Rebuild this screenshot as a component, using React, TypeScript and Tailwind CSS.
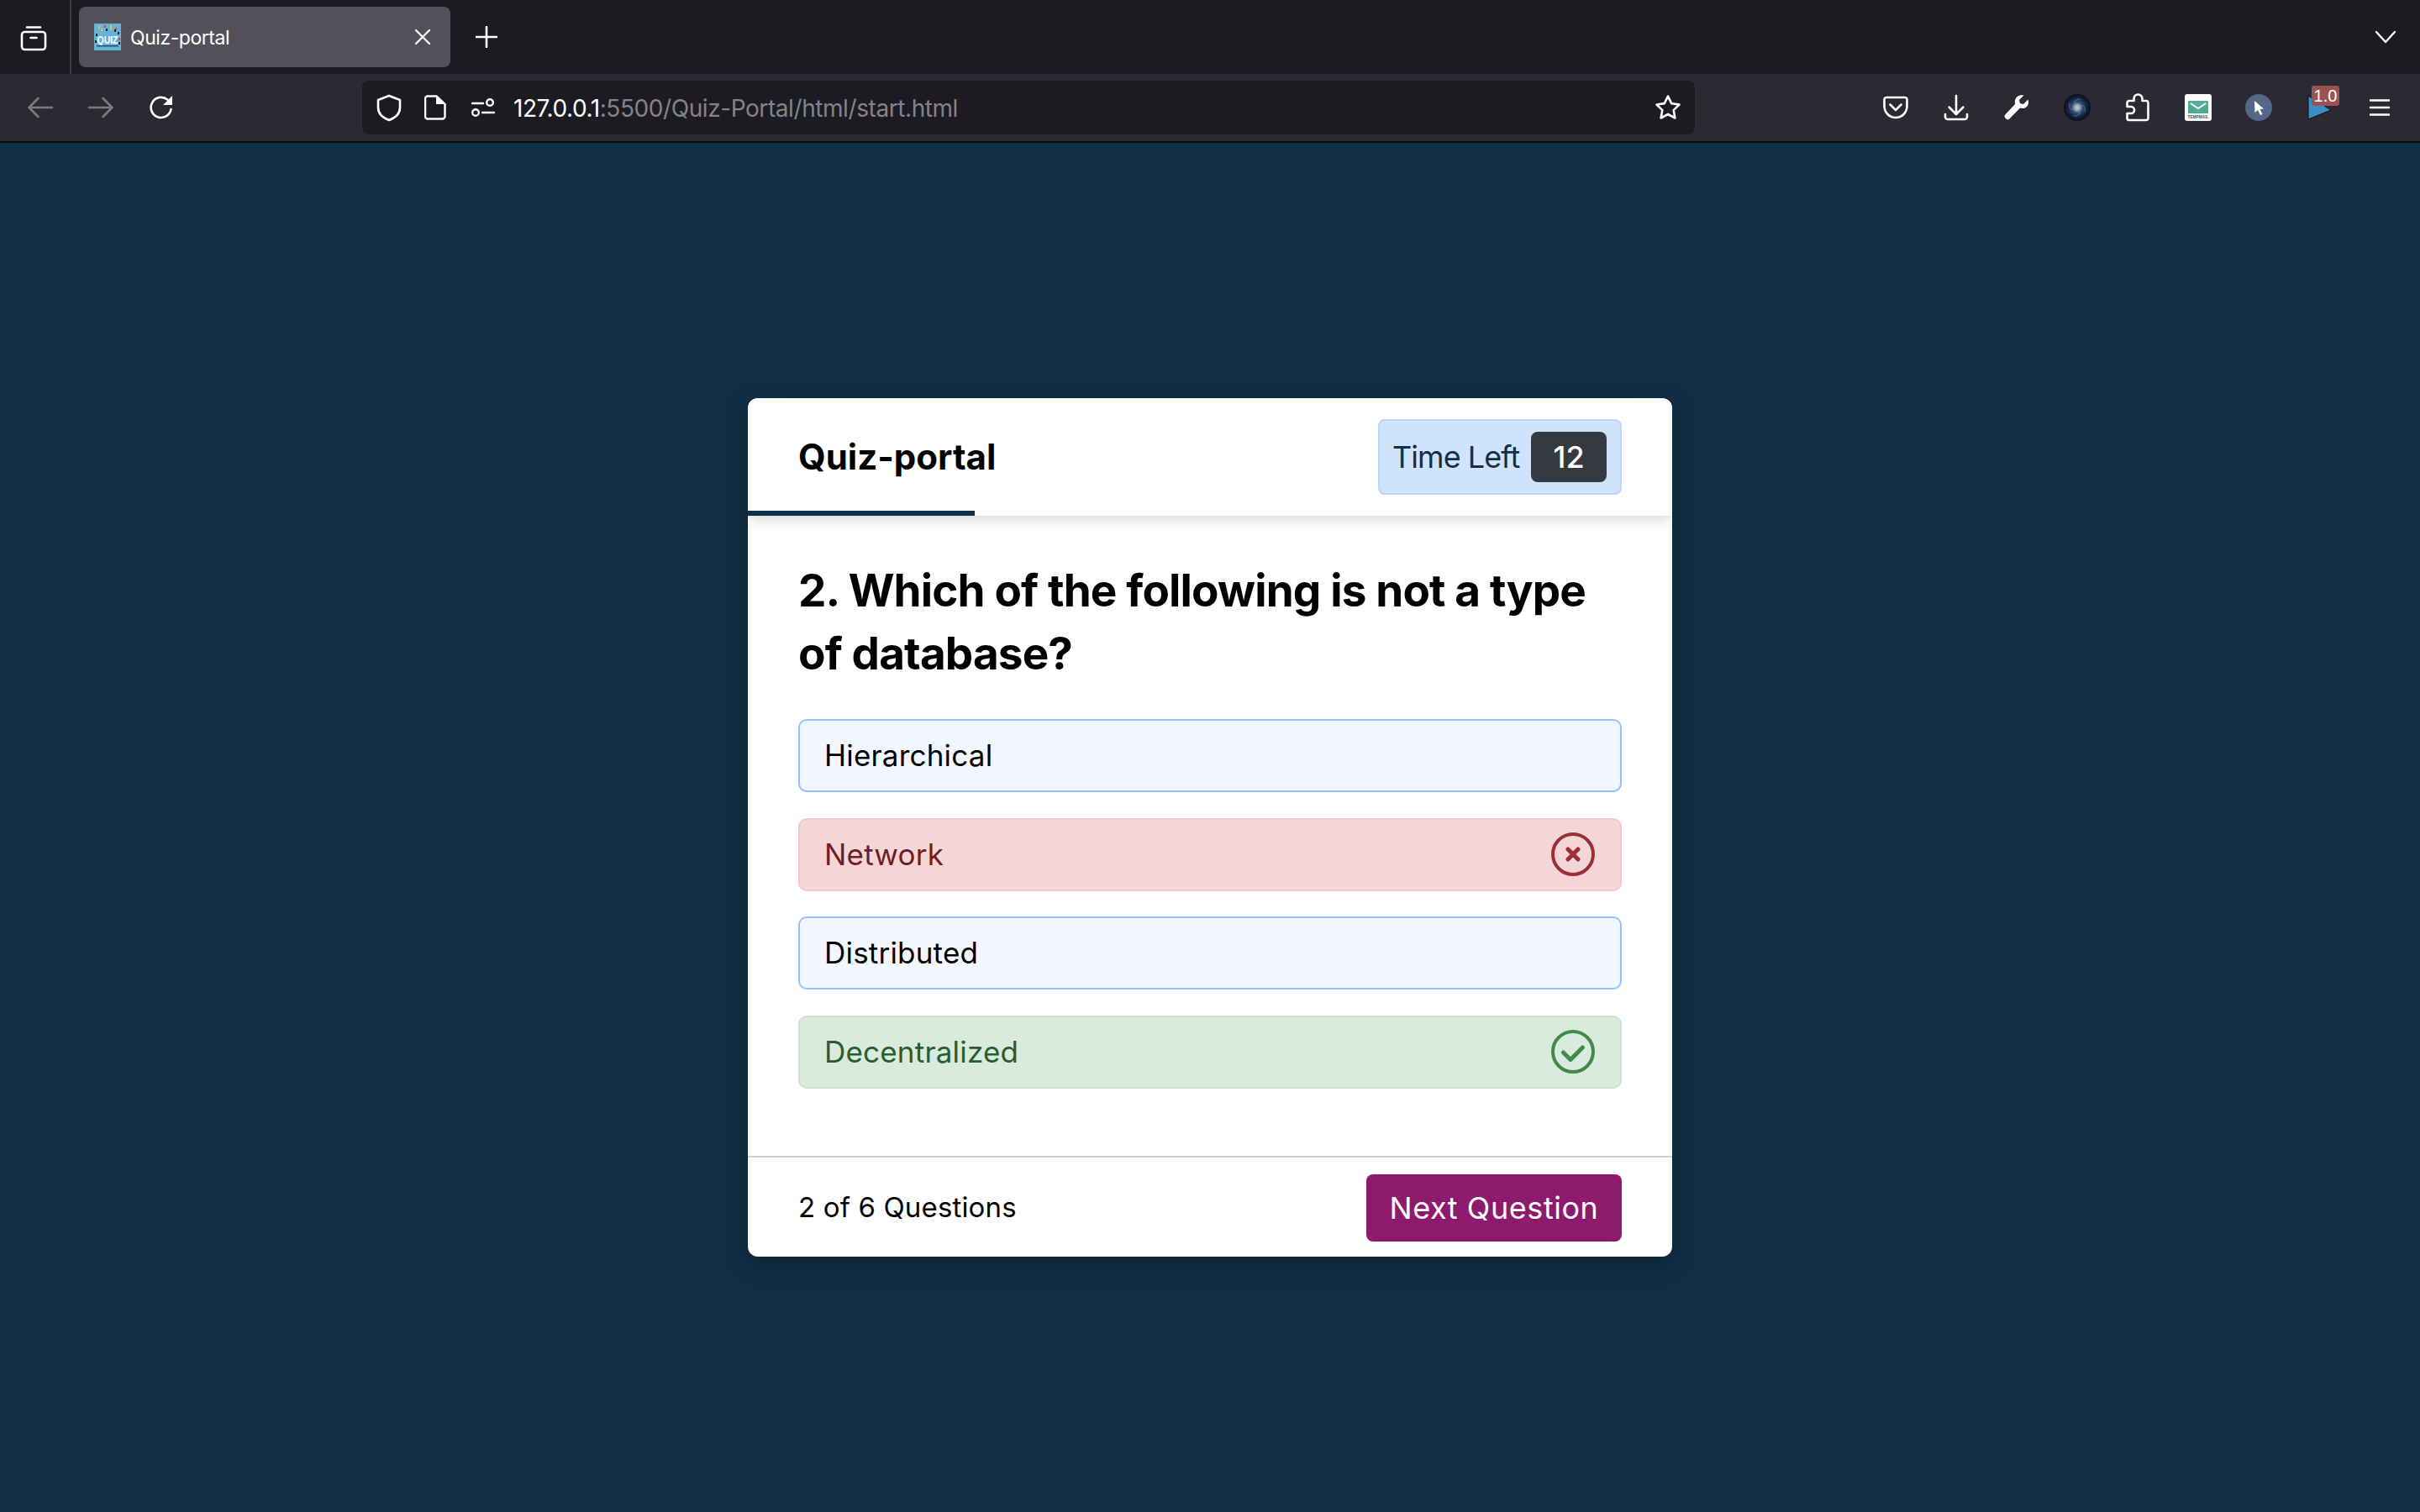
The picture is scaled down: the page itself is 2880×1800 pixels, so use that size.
import React from "react";

const stroke = { fill: "none", stroke: "currentColor", strokeWidth: 2.6, strokeLinecap: "round" as const, strokeLinejoin: "round" as const };

function Favicon() {
  const dots: [number, number, string][] = [
    [5, 3, "#e9c13d"], [8, 6, "#e9c13d"], [12, 2, "#d33c6a"], [19, 2, "#e9c13d"], [19, 5, "#e9c13d"], [25, 5, "#d33c6a"],
    [24, 7, "#222"], [28, 10, "#222"], [2, 12, "#222"], [1, 20, "#222"], [29, 17, "#d33c6a"], [14, 6, "#222"], [29, 22, "#222"],
  ];
  return (
    <svg width="32" height="32" viewBox="0 0 32 32" className="shrink-0">
      <rect width="32" height="32" fill="#66b3d6" />
      {dots.map(([x, y, c], i) => (
        <rect key={i} x={x} y={y} width="2" height="3" fill={c} />
      ))}
      <text x="16" y="24" textAnchor="middle" fontFamily="Liberation Sans, sans-serif" fontWeight="700" fontSize="12" fill="#fff" textLength="25" lengthAdjust="spacingAndGlyphs">QUIZ</text>
      <rect x="3" y="26" width="26" height="1.4" fill="#1d4a60" />
    </svg>
  );
}

function ViewIcon() {
  return (
    <svg width="32" height="32" viewBox="0 0 32 32" className="text-white" {...stroke}>
      <path d="M8 3.5h16" />
      <rect x="2" y="9" width="28" height="21" rx="3.5" />
      <path d="M12.5 16h7" />
    </svg>
  );
}

function Arrow({ flip }: { flip?: boolean }) {
  return (
    <svg width="32" height="28" viewBox="0 0 32 28" className={flip ? "text-[#7b7a81] -scale-x-100" : "text-[#7b7a81]"} {...stroke}>
      <path d="M30 14H3M13.5 3 2.5 14l11 11" />
    </svg>
  );
}

function Reload() {
  return (
    <svg width="30" height="30" viewBox="0 0 30 30" className="text-white">
      <path d="M26.5 17a12 12 0 1 1-4-11.2" fill="none" stroke="currentColor" strokeWidth="2.6" strokeLinecap="round" />
      <path d="M28 1v11H17z" fill="currentColor" />
    </svg>
  );
}

function Shield() {
  return (
    <svg width="30" height="33" viewBox="0 0 30 33" className="text-white" {...stroke}>
      <path d="M15 2 2 7v9c0 8 6 12.500 13 15 7-2.500 13-7 13-15V7z" />
    </svg>
  );
}

function PageIcon() {
  return (
    <svg width="26" height="30" viewBox="0 0 26 30" className="text-white">
      <path d="M4 1.500h10.500L24.500 11v14.500a3 3 0 0 1-3 3H4a3 3 0 0 1-3-3v-21a3 3 0 0 1 3-3z" fill="none" stroke="currentColor" strokeWidth="2.500" />
      <path d="M14 1.500v9.500h10.500z" fill="currentColor" />
    </svg>
  );
}

function Sliders() {
  return (
    <svg width="30" height="24" viewBox="0 0 30 24" className="text-white" fill="none" stroke="currentColor" strokeWidth="2.400" strokeLinecap="round">
      <path d="M2 7h13" />
      <circle cx="23" cy="6" r="3.800" />
      <circle cx="6" cy="18" r="3.800" />
      <path d="M14 18h14" />
    </svg>
  );
}

function Star() {
  return (
    <svg width="32" height="32" viewBox="0 0 32 32" className="text-white" {...stroke}>
      <path d="M16 2.500l4.200 8.600 9.300 1.400-6.800 6.600 1.700 9.400-8.400-4.500-8.400 4.500 1.700-9.400-6.800-6.600 9.300-1.400z" />
    </svg>
  );
}

function Pocket() {
  return (
    <svg width="30" height="28" viewBox="0 0 30 28" className="text-white" {...stroke}>
      <path d="M4 2h22a2.500 2.500 0 0 1 2.500 2.500V12c0 8-6 14-13.500 14S1.500 20 1.500 12V4.500A2.500 2.500 0 0 1 4 2z" />
      <path d="M8.500 10.500 15 17l6.500-6.500" />
    </svg>
  );
}

function Download() {
  return (
    <svg width="30" height="32" viewBox="0 0 30 32" className="text-white" {...stroke}>
      <path d="M15 2v21M6.500 15.500 15 24l8.500-8.500" />
      <path d="M2 24v3a3 3 0 0 0 3 3h20a3 3 0 0 0 3-3v-3" />
    </svg>
  );
}

function Wrench() {
  return (
    <svg width="30" height="30" viewBox="0 0 30 30" className="text-white">
      <path d="M28.500 5.500l-5.500 5.500-4-1-1-4 5.500-5.500c-4.500-1.300-9.500 1-10.500 6-.3 1.500-.2 3 .3 4.300L1.800 23a3.600 3.600 0 0 0 5.100 5.100l12.200-12.500c1.300.5 2.800.6 4.300.3 5-1 6.500-6 5.100-10.400z" fill="currentColor" />
    </svg>
  );
}

function Galaxy() {
  return (
    <svg width="32" height="32" viewBox="0 0 32 32">
      <defs>
        <radialGradient id="gal">
          <stop offset="0" stopColor="#efe8cc" />
          <stop offset="0.18" stopColor="#a3aeb6" />
          <stop offset="0.42" stopColor="#2f4a75" />
          <stop offset="0.75" stopColor="#12203a" />
          <stop offset="1" stopColor="#080e1c" />
        </radialGradient>
      </defs>
      <circle cx="16" cy="16" r="16" fill="url(#gal)" />
      <path d="M16 16c5-6 11-1 9 5M16 16c-5 6-11 1-9-5M16 16c6 4 2 11-4 10M16 16c-6-4-2-11 4-10" fill="none" stroke="#7e96c0" strokeWidth="1" opacity="0.55" />
    </svg>
  );
}

function Puzzle() {
  return (
    <svg width="28" height="34" viewBox="0 0 28 34" className="text-white" {...stroke}>
      <path d="M3.500 32h20.500a2.500 2.500 0 0 0 2.500-2.500V11.500A2.500 2.500 0 0 0 24 9h-4.500V6.500a5 5 0 0 0-10 0V9H4a2.500 2.500 0 0 0-2.500 2.500V16h4.500a4 4 0 0 1 0 8H1.500v5.500A2.500 2.500 0 0 0 3.500 32z" />
    </svg>
  );
}

function TempMail() {
  return (
    <svg width="32" height="32" viewBox="0 0 32 32">
      <rect width="32" height="32" rx="3" fill="#fbfbfb" />
      <rect x="4" y="8" width="24" height="15" rx="1" fill="#4fab92" />
      <path d="M7 11l9 6 9-6" fill="none" stroke="#fff" strokeWidth="2" />
      <text x="16" y="28.500" textAnchor="middle" fontFamily="Liberation Sans, sans-serif" fontWeight="700" fontSize="4.800" fill="#3a5a55">TEMPMAIL</text>
    </svg>
  );
}

function CursorIcon() {
  return (
    <svg width="32" height="32" viewBox="0 0 32 32">
      <circle cx="16" cy="16" r="16" fill="#54678a" />
      <path d="M11 8l11 9.500-4.500.5 3 6-2.500 1-3-6-3.500 3z" fill="#fff" />
    </svg>
  );
}

function PlayBadge() {
  return (
    <div className="relative w-[32px] h-[32px]">
      <svg width="30" height="30" viewBox="0 0 30 30" className="absolute left-[2px] top-[1px]">
        <path d="M1 1l27 17L1 29z" fill="#3a8cc4" stroke="#111" strokeWidth="1" />
      </svg>
      <div className="absolute left-[7px] top-[-10px] w-[33px] h-[24px] rounded-[3px] bg-[#9a5350] text-white text-[20px] leading-[24px] text-center font-['Liberation_Sans',sans-serif]">
        1.0
      </div>
    </div>
  );
}

function Menu() {
  return (
    <svg width="26" height="22" viewBox="0 0 26 22" className="text-white" fill="none" stroke="currentColor" strokeWidth="2.400" strokeLinecap="round">
      <path d="M2 2.500h22M2 11h22M2 19.500h22" />
    </svg>
  );
}

function Btn({ children }: { children: React.ReactNode }) {
  return <div className="w-[72px] h-[64px] flex items-center justify-center shrink-0">{children}</div>;
}

function Option({ text, kind }: { text: string; kind?: "bad" | "good" }) {
  const cls =
    kind === "bad"
      ? "bg-[#f4d6d8] border-[#f1c7cb] text-[#721c24]"
      : kind === "good"
        ? "bg-[#d9ebdc] border-[#c9e3cf] text-[#2a5c30]"
        : "bg-[#f2f7ff] border-[#90c3fb] text-black";
  return (
    <div className={`h-[87px] rounded-[10px] border-2 pl-[29px] pr-[30px] flex items-center justify-between text-[35px] tracking-[0.2px] ${cls}`}>
      <span>{text}</span>
      {kind === "bad" && (
        <svg width="52" height="52" viewBox="0 0 52 52">
          <circle cx="26" cy="26" r="24" fill="none" stroke="#9c2f35" strokeWidth="4" />
          <path d="M20 20l12 12M32 20 20 32" fill="none" stroke="#9c2f35" strokeWidth="5" strokeLinecap="round" />
        </svg>
      )}
      {kind === "good" && (
        <svg width="52" height="52" viewBox="0 0 52 52">
          <circle cx="26" cy="26" r="24" fill="none" stroke="#3f8b47" strokeWidth="4" />
          <path d="M14.500 27l8.500 8.500 14.500-14.500" fill="none" stroke="#3f8b47" strokeWidth="5" strokeLinecap="round" strokeLinejoin="round" />
        </svg>
      )}
    </div>
  );
}

export default function App() {
  return (
    <div className="h-screen flex flex-col bg-[#112e44] overflow-hidden">
      <div className="h-[88px] bg-[#1c1b22] flex items-stretch shrink-0">
        <div className="w-[85px] border-r-2 border-[#3d3c44] flex items-center justify-center pr-[4px] pt-[1px] shrink-0">
          <ViewIcon />
        </div>
        <div className="ml-[9px] mt-[8px] h-[72px] w-[442px] rounded-[8px] bg-[#52515b] flex items-center pl-[18px] pr-[18px] shrink-0">
          <Favicon />
          <span className="ml-[11px] pt-[2px] text-white text-[23px] font-['Inter',sans-serif] tracking-[-0.45px]">Quiz-portal</span>
          <svg width="20" height="20" viewBox="0 0 20 20" className="ml-auto mr-[5px] text-white" fill="none" stroke="currentColor" strokeWidth="2.200" strokeLinecap="round">
            <path d="M2 2l16 16M18 2 2 18" />
          </svg>
        </div>
        <div className="ml-[30px] flex items-center shrink-0">
          <svg width="26" height="26" viewBox="0 0 26 26" className="text-white" fill="none" stroke="currentColor" strokeWidth="2.600" strokeLinecap="round">
            <path d="M13 1v24M1 13h24" />
          </svg>
        </div>
        <div className="ml-auto mr-[28px] flex items-center shrink-0">
          <svg width="26" height="16" viewBox="0 0 26 16" className="text-white" fill="none" stroke="currentColor" strokeWidth="2.400" strokeLinecap="round" strokeLinejoin="round">
            <path d="M2 2l11 12L24 2" />
          </svg>
        </div>
      </div>

      <div className="h-[82px] bg-[#2b2a33] border-b-2 border-[#0c0c10] flex items-center pl-[12px] pr-[12px] shrink-0">
        <Btn><Arrow /></Btn>
        <Btn><Arrow flip /></Btn>
        <Btn><Reload /></Btn>
        <div className="ml-[203px] w-[1586px] h-[64px] rounded-[8px] bg-[#1c1b22] flex items-center pl-[17px] pr-[16px] shrink-0">
          <Shield />
          <span className="ml-[27px]"><PageIcon /></span>
          <span className="ml-[29px]"><Sliders /></span>
          <span className="ml-[21px] pt-[1px] text-[28px] font-['Inter',sans-serif] tracking-[-0.42px] text-[#84838a]">
            <span className="text-white">127.0.0.1</span>:5500/Quiz-Portal/html/start.html
          </span>
          <span className="ml-auto"><Star /></span>
        </div>
        <div className="ml-auto flex items-center">
          <Btn><Pocket /></Btn>
          <Btn><Download /></Btn>
          <Btn><Wrench /></Btn>
          <Btn><Galaxy /></Btn>
          <Btn><Puzzle /></Btn>
          <Btn><TempMail /></Btn>
          <Btn><CursorIcon /></Btn>
          <Btn><PlayBadge /></Btn>
          <Btn><Menu /></Btn>
        </div>
      </div>

      <div className="flex-1 flex items-center justify-center">
        <div className="w-[1100px] h-[1022px] bg-white rounded-[12px] shadow-[0_8px_30px_rgba(0,0,0,0.25)] flex flex-col font-['Inter',sans-serif] overflow-hidden">
          <div className="relative z-10 h-[140px] flex flex-col shrink-0 bg-white shadow-[0_5px_14px_rgba(0,0,0,0.15)]">
            <div className="flex-1 flex items-center justify-between pl-[60px] pr-[60px] pt-[5px]">
              <span className="text-[42px] font-bold text-black tracking-[0px]">Quiz-portal</span>
              <div className="w-[290px] h-[90px] rounded-[8px] border-2 border-[#b8d8fb] bg-[#cfe3fd] flex items-center pl-[15px] pr-[16px] justify-between text-[36px]">
                <span className="text-[#123047] tracking-[-0.95px]">Time Left</span>
                <span className="w-[90px] h-[60px] rounded-[8px] bg-[#343a40] text-white font-medium flex items-center justify-center">12</span>
              </div>
            </div>
            <div className="w-[270px] h-[6px] bg-[#122f45]" />
          </div>

          <div className="flex-1 pl-[60px] pr-[60px] pt-[52px]">
            <h1 className="text-[53px] leading-[75px] font-bold text-black tracking-[-0.85px]">
              2. Which of the following is not a type of database?
            </h1>
            <div className="mt-[40px] flex flex-col gap-[30.500px]">
              <Option text="Hierarchical" />
              <Option text="Network" kind="bad" />
              <Option text="Distributed" />
              <Option text="Decentralized" kind="good" />
            </div>
          </div>

          <div className="h-[120px] border-t-2 border-[#d3d3d3] flex items-center justify-between pl-[60px] pr-[60px] pt-[2px] shrink-0">
            <span className="text-[33px] text-black tracking-[0.15px]">2 of 6 Questions</span>
            <div className="w-[304px] h-[80px] rounded-[8px] bg-[#8d1a6c] text-white text-[36px] tracking-[0.55px] flex items-center justify-center">
              Next Question
            </div>
          </div>
        </div>
      </div>
    </div>
  );
}
